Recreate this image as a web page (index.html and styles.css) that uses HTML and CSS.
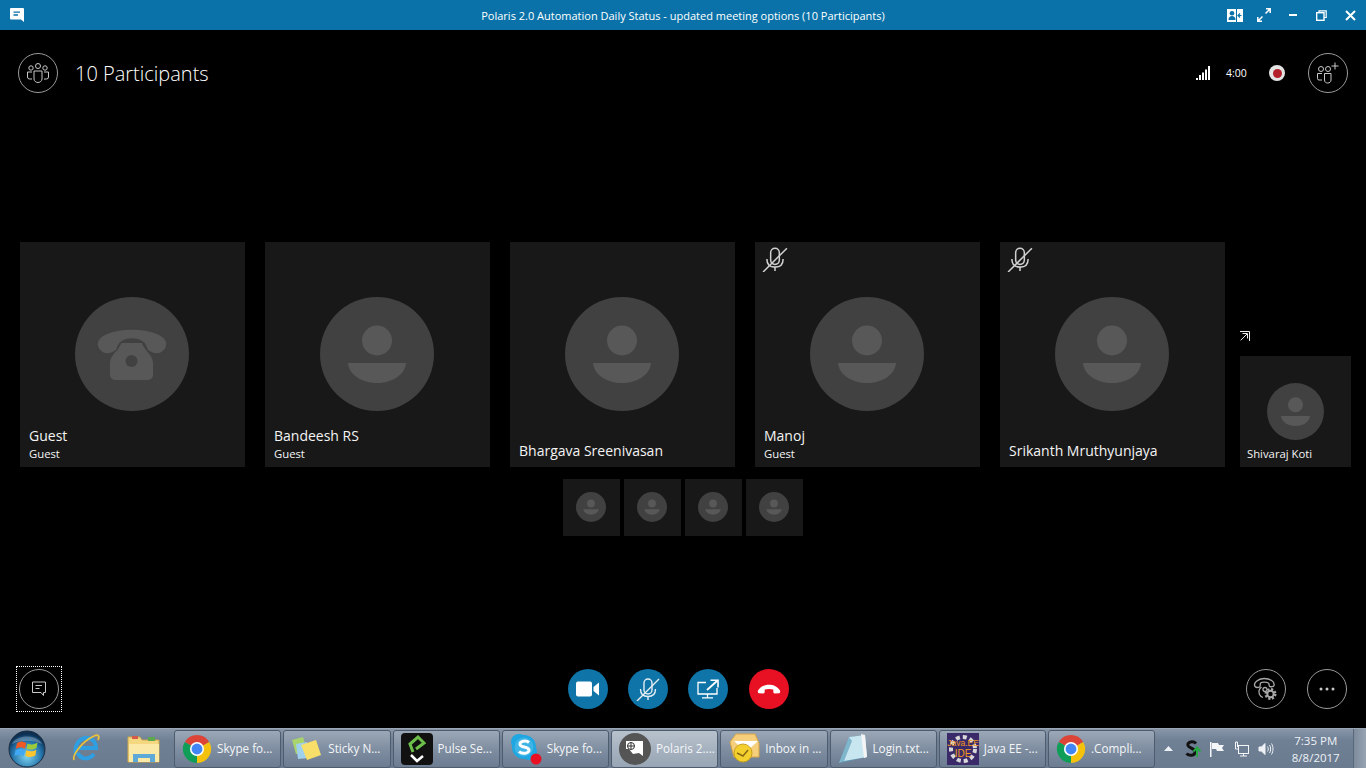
FILE: index.html
```html
<!DOCTYPE html>
<html lang="en">
<head>
<meta charset="utf-8">
<title>Polaris 2.0 Automation Daily Status</title>
<link rel="stylesheet" href="styles.css">
</head>
<body>
<svg class="defs" width="0" height="0" aria-hidden="true">
  <symbol id="person" viewBox="0 0 114 114">
    <circle cx="57" cy="57" r="57" fill="#414141"/>
    <circle cx="57" cy="43.5" r="15" fill="#585858"/>
    <path d="M28 66H86C85 78 72 86 57 86S29 78 28 66Z" fill="#585858"/>
  </symbol>
  <symbol id="phone-av" viewBox="0 0 114 114">
    <circle cx="57" cy="57" r="57" fill="#414141"/>
    <path d="M46 46H67C68 52 78 58 78 66V78a5 5 0 0 1-5 5H40a5 5 0 0 1-5-5V66C35 58 45 52 46 46Z" fill="#585858"/>
    <path d="M22 47C22 38 38 32 57 32S92 38 92 47C92 53 86 57 82 57 78 57 75 55 72 53 71 48 68 42 57 42 46 42 43 48 42 53 39 55 36 57 32 57 28 57 22 53 22 47Z" fill="#585858" stroke="#414141" stroke-width="1.500"/>
    <circle cx="56.500" cy="64" r="6" fill="#414141"/>
  </symbol>
  <symbol id="mic-off" viewBox="0 0 24 24">
    <g fill="none" stroke="currentColor" stroke-width="1.400">
      <path d="M8 13V6a4 4 0 0 1 8 0v7a4 4 0 0 1-8 0Z"/>
      <path d="M4.500 12c0 5 3 7.500 7.500 7.500s7.500-2.500 7.500-7.500"/>
      <path d="M12 19.500V23M1 24 23 2"/>
    </g>
  </symbol>
  <symbol id="chrome" viewBox="0 0 32 32">
    <path d="M16 16 3 8.500A15 15 0 0 1 29 8.500Z" fill="#db4437"/>
    <path d="M16 16 3 8.500A15 15 0 0 0 16 31Z" fill="#0f9d58"/>
    <path d="M16 16 29 8.500A15 15 0 0 1 16 31Z" fill="#f4c20d"/>
    <circle cx="16" cy="16" r="7.500" fill="#fff"/>
    <circle cx="16" cy="16" r="5.800" fill="#4285f4"/>
  </symbol>
</svg>

<div class="app">
  <header class="titlebar">
    <div class="tb-left">
      <svg class="tb-chat" viewBox="0 0 14 14"><path d="M1 0H13a1 1 0 0 1 1 1V11V14L11 11.500H1a1 1 0 0 1-1-1V1a1 1 0 0 1 1-1Z" fill="#fff"/><path d="M3.500 4.200H10M3.500 7H8" stroke="#0a72a8" stroke-width="1.300"/></svg>
    </div>
    <div class="tb-title">Polaris 2.0 Automation Daily Status - updated meeting options (10 Participants)</div>
    <div class="tb-right">
      <span class="tb-btn"><svg width="16" height="13" viewBox="0 0 16 13"><rect width="16" height="13" fill="#fff"/><circle cx="5" cy="4.300" r="2.300" fill="#0a72a8"/><path d="M1.500 11c0-3 1.500-4 3.500-4s3.500 1 3.500 4Z" fill="#0a72a8"/><rect x="9" y="0" width="1" height="13" fill="#0a72a8"/><path d="M14.500 6.500H11.500M13 4.500 11 6.500 13 8.500" stroke="#0a72a8" stroke-width="1.200" fill="none"/></svg></span>
      <span class="tb-btn"><svg width="14" height="14" viewBox="0 0 14 14" fill="none" stroke="#fff" stroke-width="1.500"><path d="M8.500 5.500 13 1M9 .8H13.200V5M5.500 8.500 1 13M.8 9V13.200H5"/></svg></span>
      <span class="tb-btn"><svg width="8" height="2" viewBox="0 0 8 2"><rect width="8" height="2" fill="#fff"/></svg></span>
      <span class="tb-btn"><svg width="11" height="11" viewBox="0 0 11 11" fill="none" stroke="#fff" stroke-width="1.200"><path d="M3 2.500V.8H10.200V7.500H8"/><rect x=".7" y="2.700" width="7.300" height="7.600" stroke-width="1.400"/></svg></span>
      <span class="tb-btn"><svg width="11" height="11" viewBox="0 0 11 11" stroke="#fff" stroke-width="2"><path d="M1 1 10 10M10 1 1 10"/></svg></span>
    </div>
  </header>

  <main class="stage">
    <section class="top">
      <span class="ring">
        <svg width="24" height="22" viewBox="0 0 24 22" fill="none" stroke="#c8c8c8" stroke-width="1"><circle cx="12" cy="4" r="2.500"/><circle cx="5" cy="6" r="2.200"/><circle cx="19" cy="6" r="2.200"/><path d="M8 9H16V17C16 19 14 20.500 12 20.500S8 19 8 17Z"/><path d="M6 17H3.500A2 2 0 0 1 1.500 15V10H6M18 17H20.500A2 2 0 0 0 22.500 15V10H18"/></svg>
      </span>
      <h1 class="count">10 Participants</h1>
      <div class="top-right">
        <svg class="signal" width="14" height="14" viewBox="0 0 14 14" fill="#fff"><rect y="12" width="2" height="2"/><rect x="3" y="9" width="2" height="5"/><rect x="6" y="6.500" width="2" height="7.500"/><rect x="9" y="3.500" width="2" height="10.500"/><rect x="12" y="0" width="2" height="14"/></svg>
        <span class="timer">4:00</span>
        <span class="rec"></span>
        <span class="ring">
          <svg width="24" height="22" viewBox="0 0 24 22" fill="none" stroke="#c8c8c8" stroke-width="1"><circle cx="5" cy="7" r="2.500"/><circle cx="12" cy="7" r="2.500"/><path d="M8.500 11.500H15V18C15 20 13.500 21 11.700 21S8.500 20 8.500 18Z"/><path d="M6 18H3A1.500 1.500 0 0 1 1.500 16.500V11.500H6"/><path d="M19 .5V7.500M15.500 4H22.500"/></svg>
        </span>
      </div>
    </section>

    <section class="tiles">
      <article class="tile">
        <svg class="avatar"><use href="#phone-av"/></svg>
        <div class="label"><div class="name">Guest</div><div class="sub">Guest</div></div>
      </article>
      <article class="tile">
        <svg class="avatar"><use href="#person"/></svg>
        <div class="label"><div class="name">Bandeesh RS</div><div class="sub">Guest</div></div>
      </article>
      <article class="tile">
        <svg class="avatar"><use href="#person"/></svg>
        <div class="label single"><div class="name">Bhargava Sreenivasan</div></div>
      </article>
      <article class="tile">
        <svg class="muted"><use href="#mic-off"/></svg>
        <svg class="avatar"><use href="#person"/></svg>
        <div class="label"><div class="name">Manoj</div><div class="sub">Guest</div></div>
      </article>
      <article class="tile">
        <svg class="muted"><use href="#mic-off"/></svg>
        <svg class="avatar"><use href="#person"/></svg>
        <div class="label single"><div class="name">Srikanth Mruthyunjaya</div></div>
      </article>
      <div class="spot-col">
        <svg class="popout" width="10" height="10" viewBox="0 0 10 10" fill="none" stroke="#ececec" stroke-width="1"><path d="M0 .5H9.500V10"/><path d="M7 3 .7 9.300"/><path d="M2.500 2.500H7.500V7.500"/></svg>
        <article class="tile spot">
          <svg class="avatar"><use href="#person"/></svg>
          <div class="label"><div class="sub">Shivaraj Koti</div></div>
        </article>
      </div>
    </section>

    <section class="thumbs">
      <div class="thumb"><svg class="thumb-av"><use href="#person"/></svg></div>
      <div class="thumb"><svg class="thumb-av"><use href="#person"/></svg></div>
      <div class="thumb"><svg class="thumb-av"><use href="#person"/></svg></div>
      <div class="thumb"><svg class="thumb-av"><use href="#person"/></svg></div>
    </section>

    <section class="controls">
      <div class="focus">
        <span class="ring">
          <svg width="16" height="16" viewBox="0 0 16 16" fill="none" stroke="#c8c8c8" stroke-width="1"><path d="M1.500 1H14.500V11.500H12.500V14.500L10 11.500H1.500Z" stroke-linejoin="round"/><path d="M4.500 4.500H11M4.500 7.500H8.500"/></svg>
        </span>
      </div>
      <div class="call">
        <span class="cbtn blue"><svg width="24" height="16" viewBox="0 0 24 16" fill="#fff"><rect width="16" height="15" y=".5" rx="2"/><path d="M17.500 6 23 1.500V14.500L17.500 10Z"/></svg></span>
        <span class="cbtn blue mic"><svg width="24" height="24"><use href="#mic-off"/></svg></span>
        <span class="cbtn blue"><svg width="22" height="20" viewBox="0 0 22 20" fill="none" stroke="#fff" stroke-width="1.300"><path d="M9 3.500H1V15H20V9"/><path d="M10.500 15V18.500M5 18.800H16"/><path d="M10 11 20 2" stroke-width="1.800"/><path d="M13.500 1.200H21V8.500" stroke-width="1.600"/></svg></span>
        <span class="cbtn red"><svg width="24" height="10" viewBox="0 0 24 10" fill="#fff"><path d="M1 6.500C4 2 8 .8 12 .8S20 2 23 6.500C23.500 7.500 23 9 22 9.300L17.700 9.500C16.800 9.500 16.300 8.500 16.300 7.500V5.500C13.500 4.700 10.500 4.700 7.700 5.500V7.500C7.700 8.500 7.200 9.500 6.300 9.500L2 9.300C1 9 .5 7.500 1 6.500Z"/></svg></span>
      </div>
      <div class="extra">
        <span class="ring">
          <svg width="26" height="26" viewBox="0 0 26 26" fill="none" stroke="#a8a8a8" stroke-width="1.300"><path d="M2 10.500C0 7 5 2.500 11 2.500S22 5.500 21 9.500C20.500 11 18 11 16.500 10.300 15.800 9.500 16.300 7.500 15.500 7 13 5.800 9 6 7.500 7 7 8 7.500 10 6.800 10.800 5 11.700 3 11.500 2 10.500Z"/><path d="M8.500 11C6 13 5.500 16 6.500 18.500 7.200 20 8.500 21 10 21.500"/><circle cx="12" cy="13.500" r="2"/><circle cx="17.500" cy="18" r="4.500" stroke-width="3" stroke-dasharray="2 1.530" stroke="#a8a8a8"/><circle cx="17.500" cy="18" r="3.200" stroke-width="2"/></svg>
        </span>
        <span class="ring"><svg width="16" height="4" viewBox="0 0 16 4" fill="#c8c8c8"><circle cx="2" cy="2" r="1.500"/><circle cx="8" cy="2" r="1.500"/><circle cx="14" cy="2" r="1.500"/></svg></span>
      </div>
    </section>
  </main>

  <footer class="taskbar">
    <div class="start">
      <svg width="38" height="38" viewBox="0 0 38 38">
        <defs>
          <radialGradient id="orb" cx="50%" cy="70%" r="62%"><stop offset="0" stop-color="#7fd4f0"/><stop offset=".65" stop-color="#2474ab"/><stop offset="1" stop-color="#0c2f52"/></radialGradient>
        </defs>
        <circle cx="19" cy="19" r="18" fill="url(#orb)" stroke="#1b2c3f"/>
        <path d="M9 13C12 11 14.500 11 18.200 13L17 18.700C14 16.700 11 16.700 7.800 18.700Z" fill="#ef5a24"/>
        <path d="M19.500 13.500C22 15 25 15 29.500 12.500L28.500 18C24.500 20 22 20 18.500 18.800Z" fill="#9ccb3c"/>
        <path d="M7.500 20.200C11 18.200 13.500 18.200 16.800 20.200L15.800 26C13 24 10 24 6.500 26Z" fill="#3fa9f5"/>
        <path d="M18.300 20.300C22 21.800 24.500 21.800 28.300 19.800L27.300 25.500C23.500 27.300 21 27.300 17.300 26Z" fill="#fdc52d"/>
        <path d="M4 14C8 4 30 4 34 14 26 9.500 12 9.500 4 14Z" fill="#fff" opacity=".25"/>
      </svg>
    </div>
    <div class="quick">
      <svg class="ie" width="32" height="32" viewBox="0 0 32 32" fill="none"><path d="M7 22C5 12 10 5 18 5 24 5 27 10 27 15H10M9 20C11 26 19 28 25 21" stroke="#2f9fe3" stroke-width="4"/><path d="M5 27C3 23 12 9 25 3 29 1 31 3 29 7" stroke="#e9c23c" stroke-width="1.800"/></svg>
    </div>
    <div class="quick q2">
      <svg width="34" height="30" viewBox="0 0 34 30"><path d="M1 3H13L15 6H32V28H1Z" fill="#f4d77e" stroke="#c8a84e"/><rect x="5" y="2" width="6" height="3" fill="#d65a4a"/><rect x="21" y="3" width="7" height="4" fill="#5ba84d"/><path d="M2 10H32V28H2Z" fill="#fbe9a8"/><path d="M6 28V20H28V28H23V24H11V28Z" fill="#5fa9d8"/></svg>
    </div>

    <div class="tasks">
      <div class="task"><svg class="ticon c30"><use href="#chrome"/></svg><span>Skype fo...</span></div>
      <div class="task"><svg class="ticon" width="32" height="30" viewBox="0 0 32 30"><path d="M1 6 12 3 16 17 5 20Z" fill="#a9d46c"/><path d="M5 10 16 8 18 24 7 25Z" fill="#9fd0ec"/><path d="M10 11 25 6 30 21 16 26Z" fill="#f8df6a"/></svg><span>Sticky N...</span></div>
      <div class="task"><svg class="ticon" width="32" height="32" viewBox="0 0 32 32" fill="none"><rect width="32" height="32" rx="4" fill="#111"/><path d="M12 19 9 11 17 4 23 10 15 16" stroke="#6cc04a" stroke-width="3"/><path d="M10 22 16 28 22 23" stroke="#fff" stroke-width="2.500"/></svg><span>Pulse Se...</span></div>
      <div class="task"><svg class="ticon" width="32" height="32" viewBox="0 0 32 32" fill="none"><circle cx="9" cy="9" r="8" fill="#1ea7e1"/><circle cx="19" cy="19" r="8" fill="#1ea7e1"/><circle cx="14" cy="14" r="12" fill="#1ea7e1"/><circle cx="14" cy="14" r="9.500" fill="#fff" opacity=".15"/><path d="M19 9.500C16 7 9.500 8 10 11.500 10.500 15 18.500 13 19 17 19.500 20.500 12 21.500 9 18.500" stroke="#fff" stroke-width="3"/><circle cx="26" cy="26" r="5.500" fill="#e81123"/></svg><span>Skype fo...</span></div>
      <div class="task active"><svg class="ticon" width="32" height="32" viewBox="0 0 32 32"><circle cx="16" cy="16" r="16" fill="#555"/><path d="M7 8H24V23L20 20 14 21 10 16H7Z" fill="#fff"/><circle cx="12" cy="13" r="3.500" fill="#fff" stroke="#333"/><path d="M8.500 13H15.500M12 9.500V16.500" stroke="#333"/></svg><span>Polaris 2....</span></div>
      <div class="task"><svg class="ticon" width="32" height="32" viewBox="0 0 32 32"><path d="M2 9 8 1H27L31 10V24H6Z" fill="#f6cf7c" stroke="#d7a544"/><path d="M6 8H30L18 19Z" fill="#fff"/><circle cx="15" cy="20" r="9" fill="#f4d02e" stroke="#c9a020"/><path d="M9 20 15 23 20 17" fill="none" stroke="#8a6a14" stroke-width="1.500"/></svg><span>Inbox in ...</span></div>
      <div class="task"><svg class="ticon" width="30" height="32" viewBox="0 0 30 32"><path d="M11 4 27 2 28 24 7 29 1 30Z" fill="#5f9cb8"/><path d="M11 4 27 2 29 24 6 28Z" fill="#c8e6f0"/><path d="M11 4 1 30 6 28 14 8Z" fill="#7fb6cc"/><path d="M23 1 27 2 29 24 26 25Z" fill="#f4f4f4"/></svg><span>Login.txt...</span></div>
      <div class="task"><svg class="ticon" width="32" height="32" viewBox="0 0 32 32"><rect width="32" height="32" fill="#3a2a6a"/><circle cx="16" cy="16" r="12" fill="none" stroke="#d8d8d8" stroke-width="4" stroke-dasharray="4 3"/><circle cx="16" cy="16" r="8" fill="#3a2a6a"/><text class="ee" x="16" y="13" text-anchor="middle">Java.EE</text><text class="ee ide" x="16" y="24" text-anchor="middle">IDE</text></svg><span>Java EE -...</span></div>
      <div class="task"><svg class="ticon c30"><use href="#chrome"/></svg><span>.Compli...</span></div>
    </div>

    <div class="tray">
      <svg class="t-up" width="9" height="5" viewBox="0 0 9 5"><path d="M0 5 4.500 0 9 5Z" fill="#eef2f6"/></svg>
      <svg class="t-i" width="16" height="18" viewBox="0 0 16 18" fill="none"><path d="M11 3.500C8 .5 2 2 3 5.500 4 8.500 10 8 10 12 10 16 4 16 1.500 13.500" stroke="#111" stroke-width="3"/><path d="M12 17V9M8.500 11.500 12 7.500 15.500 11.500" stroke="#27a844" stroke-width="2"/></svg>
      <svg class="t-i" width="16" height="16" viewBox="0 0 16 16"><rect x="1" y="1" width="1.500" height="15" fill="#f4f6f8"/><path d="M3 2H9L10 4H15L13 7 15 10H8L7 8H3Z" fill="#f4f6f8"/></svg>
      <svg class="t-i" width="16" height="16" viewBox="0 0 16 16" fill="none" stroke="#f4f6f8"><rect x="4.500" y="4.500" width="10" height="8"/><path d="M6 15H13M9.500 12.500V15"/><path d="M1.500 1V8H4M1.500 1H3.500V6"/></svg>
      <svg class="t-i" width="16" height="14" viewBox="0 0 16 14" fill="none" stroke="#eef2f6"><path d="M1 5H3.500L7 1.500V12.500L3.500 9H1Z" fill="#eef2f6"/><path d="M9.500 4.500C10.500 6 10.500 8 9.500 9.500M11.500 3C13 5 13 9 11.500 11M13.500 1.500C15.500 5 15.500 9 13.500 12.500"/></svg>
      <div class="clock"><div>7:35 PM</div><div>8/8/2017</div></div>
      <div class="show-desktop"></div>
    </div>
  </footer>
</div>
</body>
</html>
```

FILE: styles.css
```css
* { box-sizing: border-box; }
html, body { margin: 0; height: 100%; }
body { background: #000; color: #fff; font-family: "Open Sans", "Noto Sans", sans-serif; overflow: hidden; }
.defs { position: absolute; }
svg { display: block; flex: none; }

.app { width: 1366px; height: 768px; display: flex; flex-direction: column; }

/* title bar */
.titlebar { height: 30px; background: #0a72a8; display: grid; grid-template-columns: 1fr auto 1fr; align-items: center; }
.tb-left { padding-left: 10px; }
.tb-chat { width: 14px; height: 14px; }
.tb-title { font-size: 11px; }
.tb-right { display: flex; justify-content: flex-end; padding-right: 1px; }
.tb-btn { width: 29px; display: flex; justify-content: center; align-items: center; }

/* stage */
.stage { flex: 1; display: flex; flex-direction: column; min-height: 0; }
.top { display: flex; align-items: center; padding: 23px 18px 0; }
.ring { width: 40px; height: 40px; border: 1px solid #9a9a9a; border-radius: 50%; display: flex; align-items: center; justify-content: center; }
.count { margin: 0 0 0 17px; font-size: 20px; font-weight: 300; color: #fff; }
.top-right { margin-left: auto; display: flex; align-items: center; }
.signal { margin-right: 16px; }
.timer { font-size: 10.500px; width: 20px; }
.rec { width: 16px; height: 16px; margin: 0 23px; border-radius: 50%; background: #e4e4e4; display: flex; align-items: center; justify-content: center; }
.rec::before { content: ""; width: 9px; height: 9px; border-radius: 50%; background: #b3202c; }

.tiles { display: flex; align-items: flex-end; gap: 20px; margin-top: 149px; padding-left: 20px; }
.tile { position: relative; width: 225px; height: 225px; background: #181818; display: flex; align-items: center; justify-content: center; }
.avatar { width: 114px; height: 114px; margin: 0 1px 1px 0; }
.label { position: absolute; left: 9px; bottom: 5px; }
.label.single { bottom: 7px; }
.name { font-size: 14px; line-height: 18px; color: #f4f4f4; }
.sub { font-size: 11.300px; line-height: 17px; color: #f4f4f4; }
.muted { position: absolute; left: 7px; top: 4px; width: 26px; height: 26px; color: #d0d0d0; }
.spot-col { margin-left: -5px; display: flex; flex-direction: column; }
.popout { margin-bottom: 15px; }
.tile.spot { width: 111px; height: 111px; }
.spot .avatar { width: 57px; height: 57px; margin: 0; }
.spot .label { left: 7px; bottom: 5px; }

.thumbs { display: flex; justify-content: center; gap: 4px; margin-top: 12px; }
.thumb { width: 57px; height: 57px; background: #181818; display: flex; align-items: center; justify-content: center; }
.thumb-av { width: 30px; height: 30px; margin: 0 1px 1px 0; }

/* controls */
.controls { margin-top: auto; padding: 0 19px 16px 16px; display: grid; grid-template-columns: 552px auto 1fr; align-items: center; }
.focus { width: 46px; height: 46px; border: 1px dotted #fff; display: flex; align-items: center; justify-content: center; }
.call { display: flex; gap: 20px; }
.cbtn { width: 40px; height: 40px; border-radius: 50%; display: flex; align-items: center; justify-content: center; }
.cbtn.blue { background: #0f74a8; }
.cbtn.mic { color: #e6eef3; }
.cbtn.red { background: #e81123; margin-left: 1px; }
.extra { display: flex; justify-content: flex-end; gap: 21px; }

/* taskbar */
.taskbar { height: 40px; display: flex; align-items: center; background: linear-gradient(#8796a8, #6f7f94 30%, #6a7a8f); border-top: 1px solid #9aa6b4; color: #fff; }
.start { width: 72px; padding-left: 8px; }
.quick { width: 55px; }
.ie { margin-left: -3px; }
.q2 { width: 47px; }
.tasks { display: flex; gap: 2px; }
.task { width: 107.250px; height: 38px; padding-left: 7px; display: flex; align-items: center; gap: 5px; font-size: 11.700px; border: 1px solid #4e5c6e; border-radius: 3px; background: linear-gradient(#9ba8b7, #7f8ea1 50%, #6c7c91); color: #f4f6f8; overflow: hidden; white-space: nowrap; }
.task span { margin-bottom: 2px; }
.task.active { background: linear-gradient(#b8c2cd, #a6b2bf 50%, #98a5b4); }
.ticon { flex: none; }
.c30 { width: 30px; height: 30px; }
.ee { font-family: "Liberation Sans", sans-serif; font-size: 8.500px; fill: #f49a1c; }
.ide { font-size: 10px; }

.tray { flex: 1; display: flex; align-items: center; }
.t-up { margin-left: 9px; margin-right: 11.500px; }
.t-i { margin-right: 8.500px; }
.clock { width: 56px; margin-left: 5px; text-align: center; font-size: 11.500px; line-height: 17px; color: #eef2f6; }
.show-desktop { width: 13px; height: 39px; margin-left: auto; background: linear-gradient(90deg, #7d8b9c, #98a4b2); border-left: 1px solid #59687a; }
```
